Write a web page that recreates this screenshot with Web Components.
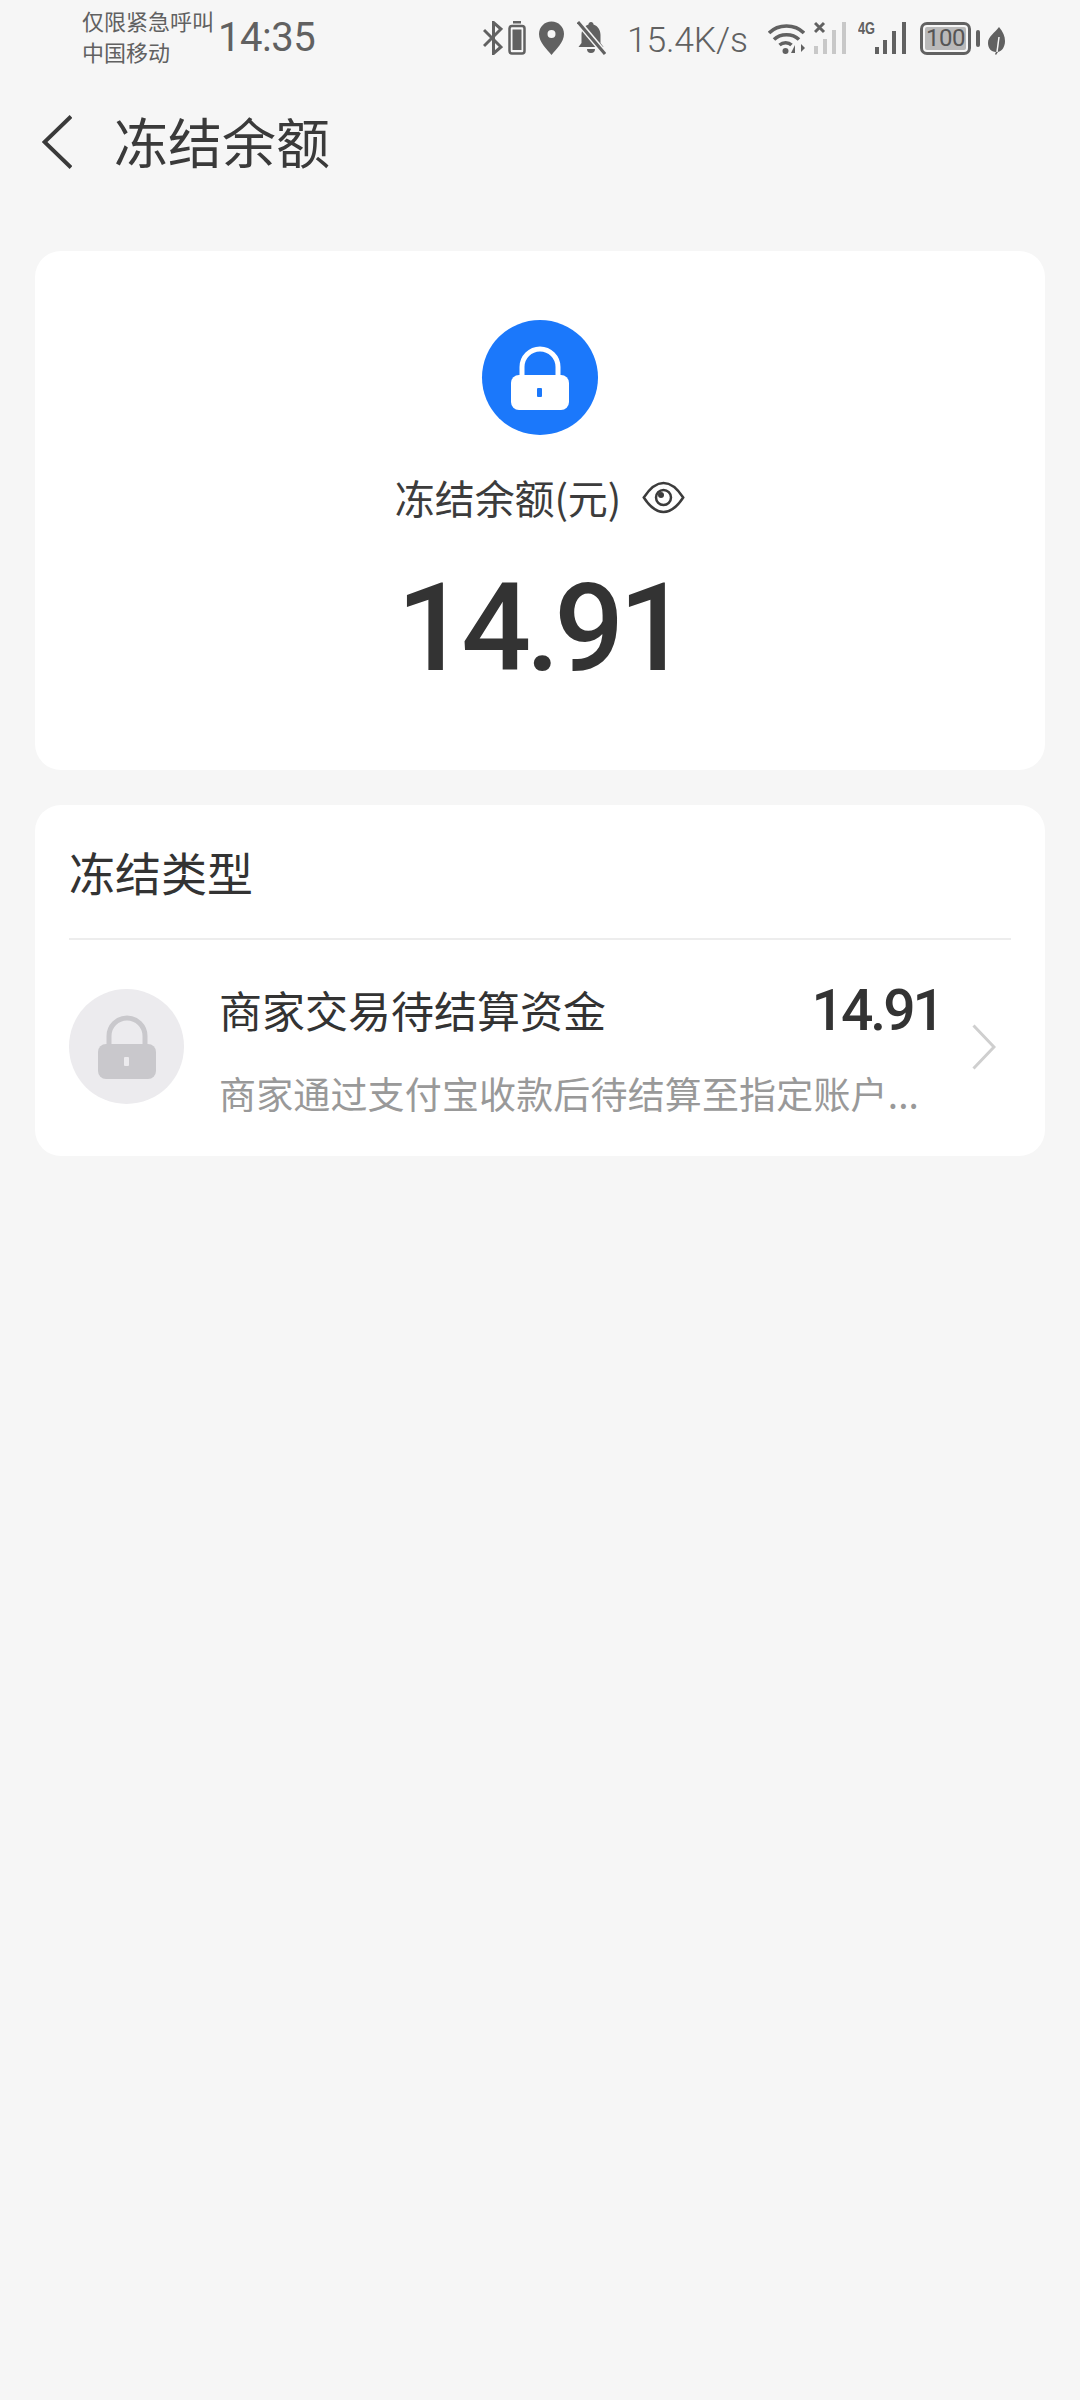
<!DOCTYPE html>
<html lang="zh-CN">
<head>
<meta charset="utf-8">
<title>冻结余额</title>
<style>
html,body{margin:0;padding:0;background:#f6f6f6;}
body{width:1080px;height:2400px;overflow:hidden;font-family:"Noto Sans CJK SC",Roboto,sans-serif;color:#333;}
</style>
</head>
<body>
<app-page>
  <status-bar></status-bar>
  <nav-bar>冻结余额</nav-bar>
  <balance-card label="冻结余额(元)" amount="14.91"></balance-card>
  <type-card heading="冻结类型">
    <type-row name="商家交易待结算资金" amount="14.91" desc="商家通过支付宝收款后待结算至指定账户..."></type-row>
  </type-card>
</app-page>
<script>
const LOCK = (body, key) => `<svg viewBox="0 0 58 64" width="58" height="64" style="display:block">
  <path d="M11 32V21a18 18 0 0 1 36 0v11" fill="none" stroke="${body}" stroke-width="5"/>
  <rect x="0" y="29" width="58" height="35" rx="8" fill="${body}"/>
  <rect x="26" y="42" width="5" height="9" rx="1" fill="${key}"/>
</svg>`;

function def(name, css, html){
  customElements.define(name, class extends HTMLElement{
    connectedCallback(){
      if(this.shadowRoot) return;
      const s=this.attachShadow({mode:'open'});
      const a={}; for(const x of this.attributes) a[x.name]=x.value;
      s.innerHTML=`<style>${css}</style>`+html(a);
    }
  });
}

def('app-page',`:host{display:flex;flex-direction:column;width:1080px;}`,()=>`<slot></slot>`);

def('status-bar',`
:host{display:flex;align-items:flex-start;height:71px;padding-left:82px;box-sizing:border-box;color:#616161;}
.carrier{display:flex;flex-direction:column;width:134px;padding-top:5px;font-size:22px;line-height:31px;white-space:nowrap;}
.time{font-family:Roboto,sans-serif;font-size:40px;line-height:46px;padding-top:15px;width:99px;letter-spacing:-.5px;margin-left:2px;white-space:nowrap;}
.right{display:flex;align-items:flex-start;margin-left:166px;padding-top:21px;height:34px;}
svg{display:block;flex:none;}
.speed{font-family:Roboto,sans-serif;font-size:35.500px;font-weight:300;line-height:34px;margin:2px 24px 0 21px;width:117px;white-space:nowrap;letter-spacing:-.2px;}
.sig4g{position:relative;width:49px;height:34px;margin:0 13px 0 12px;flex:none;}
.g{position:absolute;left:0;top:-1px;font:700 17px/18px "Liberation Sans",sans-serif;transform:scaleX(.75);transform-origin:left top;}
.sig4g svg{position:absolute;left:0;top:0;}
.batt{position:relative;width:51px;height:33px;box-sizing:border-box;border:3px solid #616161;border-radius:7px;flex:none;margin-top:1px;overflow:hidden;}
.batt i{position:absolute;left:2px;top:2px;bottom:2px;right:2px;background:#b9b9b9;border-radius:2px;}
.batt span{position:absolute;left:0;right:0;top:0;text-align:center;font:400 24px/27px Roboto,sans-serif;color:#555;letter-spacing:-.5px;}
.nub{width:4px;height:17px;background:#616161;border-radius:2px;margin:9px 8px 0 5px;flex:none;}
`,()=>`
<div class="carrier"><span>仅限紧急呼叫</span><span>中国移动</span></div>
<div class="time">14:35</div>
<div class="right">
  <svg width="20" height="34" viewBox="0 0 20 34" fill="none" stroke="#616161" stroke-width="3"><path d="M1 9l17 17-7.500 6.500V1.500L18 8 1 25"/></svg>
  <svg width="18" height="34" viewBox="0 0 18 34" style="margin-left:5px"><rect x="1.500" y="5" width="15" height="27.500" rx="2.500" fill="none" stroke="#616161" stroke-width="2.500"/><rect x="5" y="0" width="8" height="2.500" fill="#616161"/><rect x="4.500" y="8.500" width="9" height="20.500" fill="#616161"/></svg>
  <svg width="25" height="34" viewBox="0 0 25 34" style="margin-left:13px"><path fill-rule="evenodd" fill="#616161" d="M12.500 0.500C5.500 0.500 0 6 0 13c0 8 8 15.500 12.500 21C17 28.500 25 21 25 13 25 6 19.500 0.500 12.500 0.500zM12.500 9a4 4 0 1 1 0 8 4 4 0 0 1 0-8z"/></svg>
  <svg width="29" height="34" viewBox="0 0 29 34" style="margin-left:13px"><path fill="#616161" d="M14 1c1.500 0 2.500 1 2.500 2.500C21 5 23.500 9 23.500 14v8l3 4H1.500l3-4v-8C4.500 9 7 5 11.500 3.500 11.500 2 12.500 1 14 1zM10 28h8a4 4 0 0 1-8 0z"/><path d="M2 2l26 31" stroke="#f6f6f6" stroke-width="6"/><path d="M1 1l27 32" stroke="#616161" stroke-width="3"/></svg>
  <span class="speed">15.4K/s</span>
  <svg width="37" height="34" viewBox="0 0 37 34" style="flex:none;margin-right:9px" fill="none" stroke="#616161" stroke-width="3.500"><path d="M1 12c9-9.500 26-9.500 35 0"/><path d="M6 18.500c6.500-6.500 18.500-6.500 25 0"/><path d="M11.500 24c3.500-3 9-3 12 0"/><circle cx="17.500" cy="30" r="3" fill="#616161" stroke="none"/><path d="M27 32V24l-4 8zM33 23v8l4-4z" fill="#616161" stroke="none"/></svg>
  <svg width="32" height="34" viewBox="0 0 32 34" style="flex:none"><path d="M1 2l9 9M10 2l-9 9" stroke="#616161" stroke-width="3"/><g fill="#c8c8c8"><rect x="0" y="25" width="4" height="8"/><rect x="9" y="18" width="4" height="15"/><rect x="18" y="9" width="4" height="24"/><rect x="28" y="1" width="4" height="32"/></g></svg>
  <div class="sig4g"><span class="g">4G</span><svg width="49" height="34" viewBox="0 0 49 34"><g fill="#616161"><rect x="17" y="26" width="4" height="7"/><rect x="25" y="19" width="4" height="14"/><rect x="34" y="10" width="4" height="23"/><rect x="44" y="1" width="4" height="32"/></g></svg></div>
  <div class="batt"><i></i><span>100</span></div>
  <div class="nub"></div>
  <svg width="17" height="28" viewBox="0 0 17 28" style="margin-top:6px;flex:none"><path fill="#616161" d="M11 0C15 5 17 9 17 14c0 6-3 10-7 11l-2 3-1-1 1-2C3 25 0 21 0 16 0 9 7 6 11 0z"/><path d="M9 25L11 10" stroke="#f6f6f6" stroke-width="1.500"/></svg>
</div>`);

def('nav-bar',`
:host{display:flex;align-items:center;height:180px;box-sizing:border-box;padding:0 0 40px 42px;}
.t{font-size:54px;line-height:70px;margin-left:42px;margin-top:-1px;color:#3a3a3a;white-space:nowrap;}
svg{display:block;flex:none;margin-top:2px;}
`,()=>`<svg width="30" height="54" viewBox="0 0 30 54" fill="none" stroke="#3a3a3a" stroke-width="4"><path d="M29 1.500L2.500 27 29 52.500"/></svg><span class="t"><slot></slot></span>`);

def('balance-card',`
:host{display:flex;flex-direction:column;align-items:center;margin:0 35px;height:519px;background:#fff;border-radius:26px;box-sizing:border-box;padding-top:69px;}
.ic{width:116px;height:115px;border-radius:50%;background:#1b78fb;display:flex;align-items:center;justify-content:center;}
.lb{display:flex;align-items:center;margin-top:37px;margin-left:0;height:50px;}
.lb span{font-size:40px;line-height:50px;color:#3c3c3c;white-space:nowrap;letter-spacing:-.1px;}
.lb svg{margin-left:21px;display:block;}
.am{font-family:Roboto,sans-serif;font-weight:500;font-size:123px;line-height:130px;color:#333;margin-top:41px;letter-spacing:-5.500px;white-space:nowrap;}
`,a=>`<div class="ic">${LOCK('#fff','#1b78fb')}</div>
<div class="lb"><span>${a.label}</span><svg width="43" height="33" viewBox="0 0 43 33" fill="none" stroke="#3c3c3c" stroke-width="2.500"><path d="M1.800 16.500C8 7 14 2 21.500 2S35 7 41.200 16.500C35 26 29 31 21.500 31S8 26 1.800 16.500z"/><circle cx="21.500" cy="16.500" r="7.500"/><circle cx="19" cy="14" r="3" fill="#3c3c3c" stroke="none"/></svg></div>
<div class="am">${a.amount}</div>`);

def('type-card',`
:host{display:block;margin:35px 35px 0;background:#fff;border-radius:26px;padding:0 34px;height:351px;}
.h{font-size:46px;line-height:132px;color:#333;white-space:nowrap;box-sizing:border-box;border-bottom:2px solid #ededed;height:135px;}
`,a=>`<div class="h">${a.heading}</div><slot></slot>`);

def('type-row',`
:host{display:grid;grid-template-columns:115px 1fr 24px;column-gap:35px;padding:49px 15px 0 0;align-items:start;}
.ic{width:115px;height:115px;border-radius:50%;background:#ecebee;display:flex;align-items:center;justify-content:center;}
.m{min-width:0;display:flex;flex-direction:column;}
.top{display:flex;justify-content:space-between;align-items:center;height:62px;margin-top:-11px;}
.n{font-size:43px;line-height:62px;color:#333;white-space:nowrap;}
.a{font-family:Roboto,sans-serif;font-weight:500;font-size:57px;line-height:62px;color:#333;letter-spacing:-3px;white-space:nowrap;margin:4px -5px 0 0;}
.d{font-size:37px;line-height:48px;color:#999;margin-top:29px;white-space:nowrap;letter-spacing:.15px;}
svg.ch{display:block;margin-top:35px;}
`,a=>`<div class="ic">${LOCK('#c9c8cc','#ecebee')}</div>
<div class="m"><div class="top"><span class="n">${a.name}</span><span class="a">${a.amount}</span></div><div class="d">${a.desc}</div></div>
<svg class="ch" width="24" height="46" viewBox="0 0 24 46" fill="none" stroke="#cfcfcf" stroke-width="3"><path d="M1.500 1.500L22 23 1.500 44.500"/></svg>`);
</script>
</body>
</html>
